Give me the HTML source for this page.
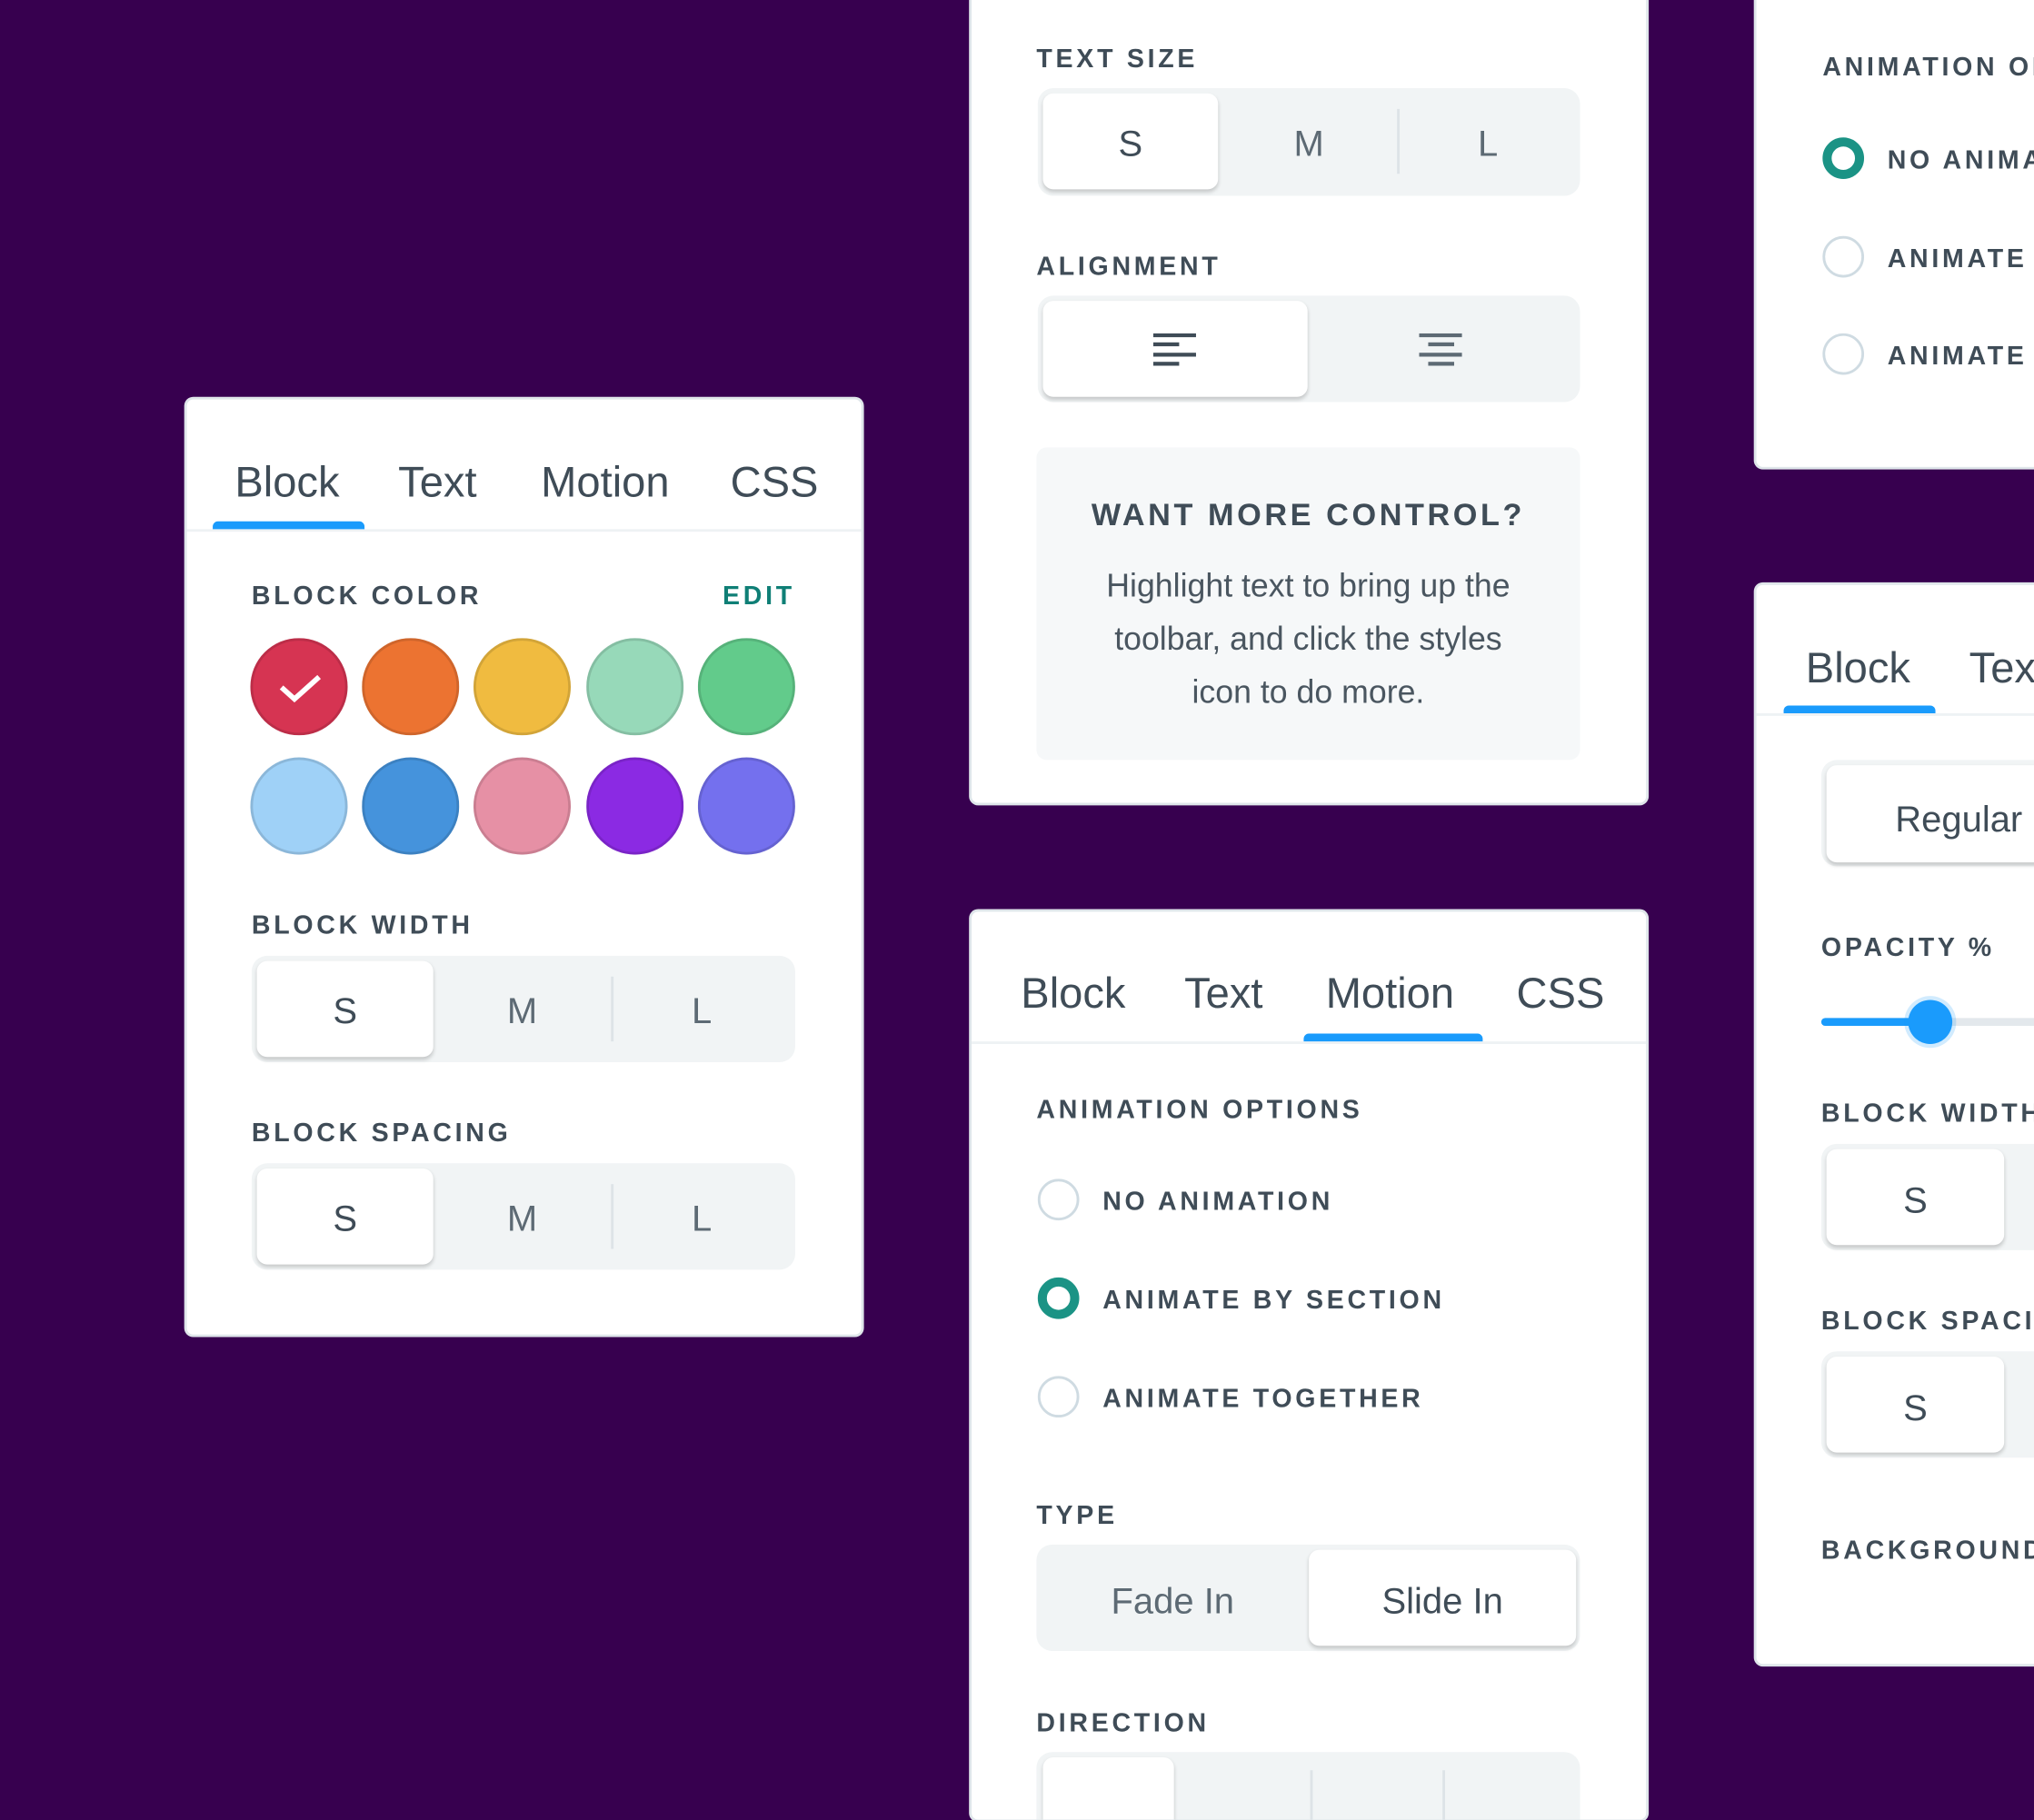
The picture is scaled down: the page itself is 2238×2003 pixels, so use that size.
<!DOCTYPE html>
<html><head><meta charset="utf-8"><style>
*{margin:0;padding:0;box-sizing:border-box}
html,body{width:2238px;height:1959px;overflow:hidden;background:#37004f}
#w{position:absolute;left:0;top:0;width:1568px;height:1373px;transform:scale(1.42730);transform-origin:0 0;font-family:"Liberation Sans",sans-serif;color:#3f4c57}
.p{position:absolute;background:#fff;border-radius:5px;box-shadow:0 0 0 2px #dfe6ea;overflow:hidden}
.a{position:absolute}
.lab{position:absolute;font-weight:bold;font-size:20px;letter-spacing:2.6px;line-height:20px;white-space:nowrap;color:#3f4c57}
.tab{position:absolute;font-size:33px;line-height:32px;color:#3f4c57;white-space:nowrap}
.ul{position:absolute;height:6px;background:#1a9bfc;border-radius:4px 4px 0 0}
.dv{position:absolute;height:2px;background:#eef2f4}
.seg{position:absolute;background:#f1f4f5;border-radius:12px}
.sel{position:absolute;background:#fff;border-radius:8px;box-shadow:0 2px 3px rgba(0,0,0,.18)}
.c{position:absolute;text-align:center;font-size:28px;color:#5d6a74}
.c.d{color:#3f4c57}
.sep{position:absolute;width:2px;background:#dde3e7}
.dot{position:absolute;width:75px;height:75px;border-radius:50%;border:2px solid rgba(0,0,0,.12)}
.r{position:absolute;width:32px;height:32px;border-radius:50%;border:2px solid #cfdbe2;background:#fff}
.r.on{border:7px solid #1b9385}
</style></head><body><div id="w">

<div class="p" style="left:144px;top:308px;width:520px;height:721px">
 <div class="tab" style="left:37px;top:48px">Block</div>
 <div class="tab" style="left:163px;top:48px">Text</div>
 <div class="tab" style="left:273px;top:48px">Motion</div>
 <div class="tab" style="left:419px;top:48px">CSS</div>
 <div class="dv" style="left:0;top:100px;width:520px"></div>
 <div class="ul" style="left:20px;top:94px;width:117px"></div>
 <div class="lab" style="left:50px;top:142px">BLOCK COLOR</div>
 <div class="lab" style="left:413px;top:142px;color:#0f7f76">EDIT</div>
 <div class="dot" style="left:49px;top:184px;background:#d63452"></div>
 <svg class="a" style="left:70px;top:208px" width="36" height="28"><path d="M3 14 L13 23 L32 6" stroke="#fff" stroke-width="4" fill="none"/></svg>
 <div class="dot" style="left:135px;top:184px;background:#ec7331"></div>
 <div class="dot" style="left:221px;top:184px;background:#f0bb40"></div>
 <div class="dot" style="left:308px;top:184px;background:#97d9b9"></div>
 <div class="dot" style="left:394px;top:184px;background:#62cb8b"></div>
 <div class="dot" style="left:49px;top:276px;background:#9fd1f7"></div>
 <div class="dot" style="left:135px;top:276px;background:#4593dc"></div>
 <div class="dot" style="left:221px;top:276px;background:#e690a5"></div>
 <div class="dot" style="left:308px;top:276px;background:#8b2ae3"></div>
 <div class="dot" style="left:394px;top:276px;background:#7470ee"></div>
 <div class="lab" style="left:50px;top:396px">BLOCK WIDTH</div>
 <div class="seg" style="left:50px;top:429px;width:419px;height:82px"></div>
 <div class="sel" style="left:54px;top:433px;width:136px;height:74px"></div>
 <div class="sep" style="left:327px;top:445px;height:50px"></div>
 <div class="c d" style="left:54px;top:456px;width:136px">S</div>
 <div class="c" style="left:190px;top:456px;width:137px">M</div>
 <div class="c" style="left:329px;top:456px;width:136px">L</div>
 <div class="lab" style="left:50px;top:556px">BLOCK SPACING</div>
 <div class="seg" style="left:50px;top:589px;width:419px;height:82px"></div>
 <div class="sel" style="left:54px;top:593px;width:136px;height:74px"></div>
 <div class="sep" style="left:327px;top:605px;height:50px"></div>
 <div class="c d" style="left:54px;top:616px;width:136px">S</div>
 <div class="c" style="left:190px;top:616px;width:137px">M</div>
 <div class="c" style="left:329px;top:616px;width:136px">L</div>
</div>

<div class="p" style="left:749px;top:-10px;width:520px;height:629px">
 <div class="lab" style="left:50px;top:46px">TEXT SIZE</div>
 <div class="seg" style="left:51px;top:78px;width:418px;height:83px"></div>
 <div class="sel" style="left:55px;top:82px;width:135px;height:74px"></div>
 <div class="sep" style="left:328px;top:94px;height:50px"></div>
 <div class="c d" style="left:55px;top:105px;width:135px">S</div>
 <div class="c" style="left:192px;top:105px;width:136px">M</div>
 <div class="c" style="left:330px;top:105px;width:136px">L</div>
 <div class="lab" style="left:50px;top:206px">ALIGNMENT</div>
 <div class="seg" style="left:51px;top:238px;width:418px;height:82px"></div>
 <div class="sel" style="left:55px;top:242px;width:204px;height:74px"></div>
 <svg class="a" style="left:140px;top:267px" width="34" height="26" fill="#3f4c57"><rect x="0" y="0" width="33" height="3"/><rect x="0" y="7" width="20" height="3"/><rect x="0" y="15" width="33" height="3"/><rect x="0" y="22" width="20" height="3"/></svg>
 <svg class="a" style="left:345px;top:267px" width="34" height="26" fill="#5d6a74"><rect x="0" y="0" width="33" height="3"/><rect x="7" y="7" width="20" height="3"/><rect x="0" y="15" width="33" height="3"/><rect x="7" y="22" width="20" height="3"/></svg>
 <div class="a" style="left:50px;top:355px;width:419px;height:241px;background:#f6f8f9;border-radius:8px"></div>
 <div class="lab" style="left:50px;top:396px;width:419px;text-align:center;font-size:24px;line-height:24px;letter-spacing:2.5px">WANT MORE CONTROL?</div>
 <div class="a" style="left:50px;top:442px;width:419px;text-align:center;font-size:25px;line-height:41px;color:#4a5660">Highlight text to bring up the<br>toolbar, and click the styles<br>icon to do more.</div>
</div>

<div class="p" style="left:749px;top:703px;width:520px;height:700px">
 <div class="tab" style="left:38px;top:47px">Block</div>
 <div class="tab" style="left:164px;top:47px">Text</div>
 <div class="tab" style="left:273px;top:47px">Motion</div>
 <div class="tab" style="left:420px;top:47px">CSS</div>
 <div class="dv" style="left:0;top:100px;width:520px"></div>
 <div class="ul" style="left:256px;top:94px;width:138px"></div>
 <div class="lab" style="left:50px;top:143px">ANIMATION OPTIONS</div>
 <div class="r" style="left:51px;top:206px"></div>
 <div class="lab" style="left:101px;top:214px">NO ANIMATION</div>
 <div class="r on" style="left:51px;top:282px"></div>
 <div class="lab" style="left:101px;top:290px">ANIMATE BY SECTION</div>
 <div class="r" style="left:51px;top:358px"></div>
 <div class="lab" style="left:101px;top:366px">ANIMATE TOGETHER</div>
 <div class="lab" style="left:50px;top:456px">TYPE</div>
 <div class="seg" style="left:50px;top:488px;width:419px;height:82px"></div>
 <div class="sel" style="left:260px;top:492px;width:206px;height:74px"></div>
 <div class="c" style="left:50px;top:516px;width:210px">Fade In</div>
 <div class="c d" style="left:260px;top:516px;width:206px">Slide In</div>
 <div class="lab" style="left:50px;top:616px">DIRECTION</div>
 <div class="seg" style="left:50px;top:648px;width:419px;height:82px"></div>
 <div class="sel" style="left:55px;top:652px;width:101px;height:74px"></div>
 <div class="sep" style="left:261px;top:662px;height:50px"></div>
 <div class="sep" style="left:363px;top:662px;height:50px"></div>
</div>

<div class="p" style="left:1354px;top:-10px;width:240px;height:370px">
 <div class="lab" style="left:51px;top:52px">ANIMATION OPTIONS</div>
 <div class="r on" style="left:51px;top:116px"></div>
 <div class="lab" style="left:101px;top:124px">NO ANIMATION</div>
 <div class="r" style="left:51px;top:192px"></div>
 <div class="lab" style="left:101px;top:200px">ANIMATE BY SECTION</div>
 <div class="r" style="left:51px;top:267px"></div>
 <div class="lab" style="left:101px;top:275px">ANIMATE TOGETHER</div>
</div>

<div class="p" style="left:1354px;top:451px;width:240px;height:832px">
 <div class="tab" style="left:38px;top:48px">Block</div>
 <div class="tab" style="left:164px;top:48px">Text</div>
 <div class="dv" style="left:0;top:99px;width:240px"></div>
 <div class="ul" style="left:21px;top:93px;width:117px"></div>
 <div class="seg" style="left:50px;top:135px;width:300px;height:82px"></div>
 <div class="sel" style="left:54px;top:139px;width:250px;height:75px"></div>
 <div class="c d" style="left:107px;top:165px;font-size:28px">Regular</div>
 <div class="lab" style="left:50px;top:270px">OPACITY %</div>
 <div class="a" style="left:50px;top:334px;width:200px;height:6px;background:#e3e8ec;border-radius:3px"></div>
 <div class="a" style="left:50px;top:334px;width:84px;height:6px;background:#1a9bfc;border-radius:3px"></div>
 <div class="a" style="left:117px;top:320px;width:34px;height:34px;background:#1a9bfc;border-radius:50%;box-shadow:0 0 0 3px rgba(26,155,252,.2)"></div>
 <div class="lab" style="left:50px;top:398px">BLOCK WIDTH</div>
 <div class="seg" style="left:50px;top:431px;width:300px;height:82px"></div>
 <div class="sel" style="left:54px;top:435px;width:137px;height:74px"></div>
 <div class="c d" style="left:54px;top:459px;width:137px">S</div>
 <div class="lab" style="left:50px;top:558px">BLOCK SPACING</div>
 <div class="seg" style="left:50px;top:591px;width:300px;height:82px"></div>
 <div class="sel" style="left:54px;top:595px;width:137px;height:74px"></div>
 <div class="c d" style="left:54px;top:619px;width:137px">S</div>
 <div class="lab" style="left:50px;top:735px">BACKGROUND</div>
</div>

</div></body></html>
